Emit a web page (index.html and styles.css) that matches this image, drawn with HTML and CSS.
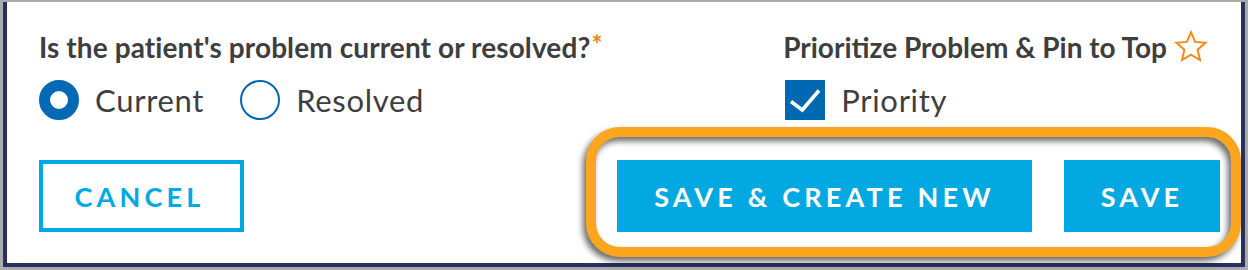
FILE: index.html
```html
<!DOCTYPE html>
<html lang="en">
<head>
<meta charset="utf-8">
<title>Problem form</title>
<link rel="stylesheet" href="styles.css">
</head>
<body>
<div class="panel">
  <div class="top">
    <div class="group">
      <div class="title title-question">Is the patient's problem current or resolved?<span class="req">*</span></div>
      <div class="options">
        <label class="option"><span class="radio checked"></span><span class="label">Current</span></label>
        <label class="option"><span class="radio"></span><span class="label">Resolved</span></label>
      </div>
    </div>
    <div class="group">
      <div class="title">Prioritize Problem &amp; Pin to Top
        <svg class="star" viewBox="0 0 34 32" width="34" height="32" aria-hidden="true"><path d="M17 2.2 L21.1 11.9 L31.6 12.8 L23.6 19.7 L26 30 L17 24.6 L8 30 L10.4 19.7 L2.4 12.8 L12.9 11.9 Z" fill="none" stroke="#f28a1d" stroke-width="2" stroke-linejoin="miter"/></svg>
      </div>
      <div class="options">
        <label class="option priority"><span class="checkbox"><svg viewBox="0 0 40 40" width="40" height="40" aria-hidden="true"><path d="M6 21.5 L17.3 30 L34 10.5" fill="none" stroke="#fff" stroke-width="3.6"/></svg></span><span class="label">Priority</span></label>
      </div>
    </div>
  </div>
  <div class="actions">
    <button class="btn btn-outline cancel">CANCEL</button>
    <div class="primary">
      <button class="btn btn-fill create">SAVE &amp; CREATE NEW</button>
      <button class="btn btn-fill save">SAVE</button>
    </div>
  </div>
  <div class="highlight"></div>
</div>
</body>
</html>
```

FILE: styles.css
```css
html, body {
  margin: 0;
  padding: 0;
}
body {
  background: #ababab;
  width: 1248px;
  height: 270px;
  overflow: hidden;
  font-family: Lato, "Liberation Sans", sans-serif;
  color: #3e3e3e;
}
.panel {
  position: relative;
  box-sizing: border-box;
  margin: 2px 3px 0 3px;
  height: 265px;
  background: #fff;
  border: 4px solid #26315d;
  border-top: 0;
  padding: 29px 21px 0 32px;
}
.top {
  display: flex;
  justify-content: space-between;
  padding-right: 12px;
}
.group {
  display: flex;
  flex-direction: column;
}
.title {
  font-size: 28px;
  font-weight: 700;
  line-height: 32px;
  height: 32px;
  display: flex;
  align-items: center;
  white-space: nowrap;
}
.title-question {
  letter-spacing: 0.1px;
}
.req {
  color: #f5821f;
  font-size: 26px;
  align-self: flex-start;
  line-height: 26px;
  margin-left: 1px;
}
.star {
  margin-left: 7px;
  margin-top: -2px;
}
.options {
  display: flex;
  margin-top: 17px;
  gap: 36px;
}
.option {
  display: flex;
  align-items: center;
  height: 40px;
  gap: 16px;
}
.priority {
  padding-left: 2px;
}
.label {
  font-size: 31px;
  letter-spacing: 0.7px;
  line-height: 40px;
}
.radio {
  box-sizing: border-box;
  width: 40px;
  height: 40px;
  border-radius: 50%;
  border: 2px solid #0069b4;
  background: #fff;
}
.radio.checked {
  border: 11px solid #0069b4;
}
.checkbox {
  width: 40px;
  height: 40px;
  background: #0067b1;
  display: block;
}
.checkbox svg {
  display: block;
}
.actions {
  display: flex;
  justify-content: space-between;
  margin-top: 40px;
}
.primary {
  display: flex;
  gap: 32px;
}
.btn {
  box-sizing: border-box;
  height: 72px;
  font-family: Lato, "Liberation Sans", sans-serif;
  font-weight: 700;
  font-size: 27px;
  letter-spacing: 4.2px;
  padding: 0;
  display: flex;
  align-items: center;
  justify-content: center;
  border-radius: 0;
  cursor: pointer;
}
.btn-outline {
  background: #fff;
  color: #00a8e4;
  border: 4px solid #00a8e4;
}
.btn-fill {
  background: #02a8e2;
  color: #fff;
  border: 0;
}
.cancel { width: 205px; padding-right: 4px; }
.create { width: 415px; }
.save { width: 156px; }
.highlight {
  position: absolute;
  left: 579px;
  top: 125px;
  width: 655px;
  height: 130px;
  box-sizing: border-box;
  border: 10px solid #fca61f;
  border-radius: 34px;
  filter: drop-shadow(-3px 4px 3px rgba(0, 0, 0, 0.6));
  pointer-events: none;
}
```
